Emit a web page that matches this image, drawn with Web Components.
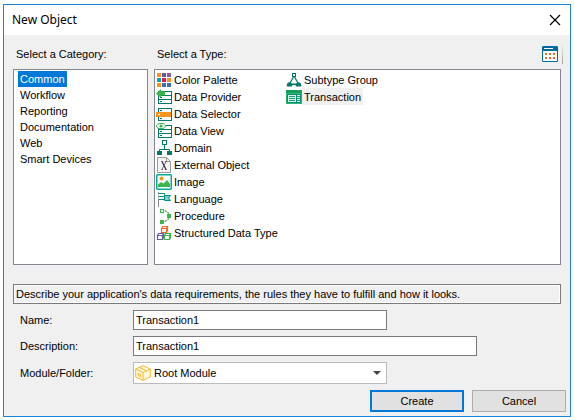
<!DOCTYPE html>
<html lang="en">
<head>
<meta charset="utf-8">
<title>New Object</title>
<style>
  body { margin: 0; background: #fff; color: #000; font: 11px/16px "Liberation Sans", Arial, sans-serif; }
</style>
</head>
<body>
<gx-dialog>
  <span slot="title">New Object</span>
  <gx-chooser>
    <span slot="category-label">Select a Category:</span>
    <span slot="type-label">Select a Type:</span>
    <gx-category slot="categories" selected>Common</gx-category>
    <gx-category slot="categories">Workflow</gx-category>
    <gx-category slot="categories">Reporting</gx-category>
    <gx-category slot="categories">Documentation</gx-category>
    <gx-category slot="categories">Web</gx-category>
    <gx-category slot="categories">Smart Devices</gx-category>
    <gx-type slot="types" icon="palette">Color Palette</gx-type>
    <gx-type slot="types" icon="provider">Data Provider</gx-type>
    <gx-type slot="types" icon="selector">Data Selector</gx-type>
    <gx-type slot="types" icon="view">Data View</gx-type>
    <gx-type slot="types" icon="domain">Domain</gx-type>
    <gx-type slot="types" icon="external">External Object</gx-type>
    <gx-type slot="types" icon="image">Image</gx-type>
    <gx-type slot="types" icon="language">Language</gx-type>
    <gx-type slot="types" icon="procedure">Procedure</gx-type>
    <gx-type slot="types" icon="structure">Structured Data Type</gx-type>
    <gx-type slot="types" icon="subtype">Subtype Group</gx-type>
    <gx-type slot="types" icon="transaction" selected>Transaction</gx-type>
  </gx-chooser>
  <gx-hint>Describe your application's data requirements, the rules they have to fulfill and how it looks.</gx-hint>
  <gx-text-field label="Name:" value="Transaction1"></gx-text-field>
  <gx-text-field label="Description:" value="Transaction1" wide></gx-text-field>
  <gx-select-field label="Module/Folder:" value="Root Module" icon="module"></gx-select-field>
  <gx-button slot="actions" primary>Create</gx-button>
  <gx-button slot="actions">Cancel</gx-button>
</gx-dialog>

<script>
const G = '#00796b';
const server = `<g fill="#fff" stroke="${G}"><rect x="2.5" y="2.5" width="13" height="4"/><rect x="2.5" y="6.5" width="13" height="4"/><rect x="2.5" y="10.5" width="13" height="4"/></g><path d="M4 4.5h2M4 8.5h2M4 12.5h2" stroke="${G}"/>`;
const ICONS = {
  palette: [['#f7941d','#5a5aa5','#8e5aa8'],['#00a99d','#ed145b','#f7941d'],['#f7941d','#3c6eb4','#3c6eb4']]
    .map((r, y) => r.map((c, x) => `<rect x="${1 + x * 5}" y="${1 + y * 5}" width="4" height="4" fill="${c}"/>`).join('')).join(''),
  provider: server + '<path d="M0 4.500 5 0v2.500h4v4H5V9z" fill="#39b54a"/>',
  selector: server + '<path d="M0 6h15v5H0z" fill="#f7941d"/><path d="M2 8h2v1H2z" fill="#fff"/>',
  view: server + '<ellipse cx="5" cy="3" rx="4.5" ry="2.5" fill="#fff" stroke="#39b54a"/><circle cx="5" cy="3" r="1.6" fill="#39b54a"/>',
  domain: `<path d="M8.500 5v4.500M3.500 12V9.500h10V12" fill="none" stroke="${G}"/><rect x="6.500" y=".5" width="4" height="4" fill="#fff" stroke="${G}"/><path d="M1 11h5v4H1zM11 11h5v4h-5z" fill="${G}"/>`,
  external: '<path d="M1.500.5h9l4 4v11h-13z" fill="#f4f4f4" stroke="#999"/><path d="M10.500.5v4h4" fill="none" stroke="#999"/><path d="M5 4.500h2M9 4.500h2M5 12.500h2M9 12.500h2M10 4.500l-4 8" stroke="#555" stroke-width=".8" fill="none"/><path d="m6 4.500 4 8" stroke="#333" stroke-width="1.300"/>',
  image: '<rect x=".75" y=".75" width="14.500" height="14.500" rx="1" fill="#fff" stroke="#00a99d" stroke-width="1.500"/><circle cx="5.500" cy="4.500" r="2" fill="#f7941d"/><path d="M2 13v-2.500L5 8l2.500 1.500L11 6l3 4v3z" fill="#39b54a"/>',
  language: '<path d="M2.500 1v15" stroke="#888"/><path d="M2.500 2.500h6v6h-6M2.500 5.500h6" fill="#fff" stroke="#00908a"/><path d="M8.500 4.500h6l-2 2.500 2 2.500h-6z" fill="#7fd0c8" stroke="#00908a"/>',
  procedure: '<rect x="4.500" y="1.500" width="3" height="3" fill="#fff" stroke="#39b54a"/><path d="m9 2.500 4 3M13 10.500l-4 3" stroke="#39b54a" stroke-width="1.300" stroke-dasharray="2 1"/><path d="M11 6h4v4h-4zM4 12h4v4H4z" fill="#39b54a"/>',
  structure: '<g fill="#fff" stroke-width="1.200"><path d="M5.500 3.500h5v4h-5zM5.500 3.500 7 1.500h4.500l-1 2M11.500 1.500v4l-1 2" stroke="#f26522"/><path d="M1.500 10.500h5v4h-5zM1.500 10.500 2.500 8.500h5l-1 2M7.500 8.500v4l-1 2" stroke="#6b58a6"/><path d="M8.500 10.500h5v4h-5zM8.500 10.500l1-2h5l-1 2M14.500 8.500v4l-1 2" stroke="#39b54a"/></g>',
  subtype: `<path d="M8 4 3.500 12h9zM3.500 12.500h9" fill="none" stroke="${G}" stroke-width="1.200"/><rect x="6.500" y="1.500" width="3" height="3" fill="#fff" stroke="${G}"/><path d="M2 11h3l1 3H1zM11 11h3l1 3h-5z" fill="${G}" stroke="${G}"/>`,
  transaction: '<path d="M0 1h16v14H0z" fill="#2bb673"/><path d="M0 1h16v3H0z" fill="#1a9d5c"/><path d="M1 5h14v9H1z" fill="#0b8b72"/><path d="M2 6h8v7H2zM11 6h3v7h-3z" fill="#d8f3e4"/><path d="M3 7.500h6M3 9.500h6M3 11.500h6M11 7.500h3M11 9.500h3M11 11.500h3" stroke="#1d9c77"/>',
  module: '<g fill="#fff8e1" stroke="#fbb829" stroke-linejoin="round"><path d="M8 .7 15.300 4v8L8 15.300.7 12V4z"/><path d="M.7 4 8 7.500 15.300 4M8 7.500v7.800M4.300 2.300l7.400 3.600" fill="none"/><path d="m3 8.500 2.500 1.200v2L3 10.500z"/></g>',
  calendar: '<rect x=".5" y=".5" width="15" height="15" rx=".5" fill="#fff" stroke="#0069a3"/><path d="M0 1h16v4H0z" fill="#0069a3"/><path d="M2 2.500h9" stroke="#fff"/><path d="M3 7h2v2H3zM7 7h2v2H7zM11 7h2v2h-2zM3 11h2v2H3zM7 11h2v2H7zM11 11h2v2h-2z" fill="#f26522"/>'
};

function define(name, render) {
  customElements.define(name, class extends HTMLElement {
    connectedCallback() {
      if (this.shadowRoot) return;
      this.attachShadow({ mode: 'open' }).innerHTML =
        '<style>*{box-sizing:border-box}:host{box-sizing:border-box}button,input,select{font:inherit;color:inherit;margin:0;border-radius:0}</style>' + render(this);
    }
  });
}

define('gx-icon', el => `
  <style>:host{display:block;width:16px;height:16px;flex:none}svg{display:block}</style>
  <svg width="16" height="16" viewBox="0 0 16 16" aria-hidden="true">${ICONS[el.getAttribute('name')]}</svg>`);

define('gx-dialog', () => `
  <style>
    :host{display:flex;flex-direction:column;min-height:calc(100vh - 7px);margin:4px 3px 3px;border:1px solid #1883d7;background:#f0f0f0}
    header{display:flex;align-items:center;justify-content:space-between;height:30px;padding:0 9px 0 8px;background:#fff}
    h1{margin:0;font:12px/16px "Noto Sans","Open Sans",sans-serif}
    button{display:flex;padding:0;border:0;background:none}
    main{flex:1;display:flex;flex-direction:column;gap:6px;padding:0 9px 6px}
    footer{display:flex;justify-content:flex-end;gap:8px;padding:0 4px 4px}
  </style>
  <header><h1><slot name="title"></slot></h1>
    <button type="button" aria-label="Close"><svg width="12" height="12" viewBox="0 0 12 12"><path d="m1 1 10 10M11 1 1 11" stroke="#000" stroke-width="1.200"/></svg></button>
  </header>
  <main><slot></slot></main>
  <footer><slot name="actions"></slot></footer>`);

define('gx-chooser', () => `
  <style>
    :host{flex:1;display:grid;grid-template:34px 1fr / 135px 1fr;column-gap:6px;margin-bottom:13px}
    .label{display:flex;align-items:center;padding:4px 0 0 3px}
    .tools{display:flex;align-items:center;margin:0 -2px 0 auto;gap:4px}
    .tools button{display:flex;padding:0;border:0;background:none}
    .sep{width:1px;height:20px;background:linear-gradient(#f0f0f0,#a0a0a0)}
    .list{border:1px solid #828790;background:#fff}
    .categories{padding:1px 4px}
    .types{display:grid;grid-auto-flow:column;grid-template-rows:repeat(10,17px);grid-auto-columns:130px;align-content:start;padding:1px}
  </style>
  <div class="label"><slot name="category-label"></slot></div>
  <div class="label"><slot name="type-label"></slot>
    <span class="tools"><button type="button" aria-label="View"><gx-icon name="calendar"></gx-icon></button><span class="sep"></span></span></div>
  <div class="list categories"><slot name="categories"></slot></div>
  <div class="list types"><slot name="types"></slot></div>`);

define('gx-category', () => `
  <style>
    :host{display:flex}
    button{height:16px;padding:0 2px;border:0;background:none;line-height:16px;white-space:nowrap}
    :host([selected]) button{background:#0078d7;color:#fff}
  </style>
  <button type="button"><slot></slot></button>`);

define('gx-type', el => `
  <style>
    :host{display:flex}
    button{display:flex;align-items:center;height:17px;padding:0;border:0;background:none;white-space:nowrap}
    span{padding:1px 2px 0;line-height:16px}
    :host([selected]) span{background:#f0f0f0}
  </style>
  <button type="button"><gx-icon name="${el.getAttribute('icon')}"></gx-icon><span><slot></slot></span></button>`);

define('gx-hint', () => `
  <style>:host{display:block;padding:0 2px;border:1px solid #7a7a7a;box-shadow:inset 0 0 0 1px #fff;line-height:18px}</style><slot></slot>`);

const fieldStyle = `
  :host{display:grid;grid-template-columns:113px 1fr;align-items:center;padding-left:7px}
  .box{width:254px;max-width:100%}
  :host([wide]) .box{width:344px}`;

define('gx-text-field', el => `
  <style>${fieldStyle}
    input{display:block;height:20px;padding:0 2px;border:1px solid #7a7a7a;background:#fff;outline:0}
  </style>
  <label for="f">${el.getAttribute('label')}</label>
  <input class="box" id="f" type="text" value="${el.getAttribute('value')}">`);

define('gx-select-field', el => `
  <style>${fieldStyle}
    .box{display:grid;grid-template-columns:16px 1fr 10px;align-items:center;height:22px;padding:0 3px 0 1px;border:1px solid #bcbcbc;background:#fff}
    select{grid-area:1/1/2/4;width:100%;height:20px;padding:0 14px 0 19px;border:0;background:none;appearance:none;outline:0}
    gx-icon{grid-area:1/1}
    svg{grid-area:1/3;pointer-events:none}
  </style>
  <label for="f">${el.getAttribute('label')}</label>
  <div class="box"><gx-icon name="${el.getAttribute('icon')}"></gx-icon>
    <select id="f"><option>${el.getAttribute('value')}</option></select>
    <svg width="8" height="4" viewBox="0 0 8 4" aria-hidden="true"><path d="M0 0h8L4 4z" fill="#444"/></svg></div>`);

define('gx-button', () => `
  <style>
    :host{display:block;width:94px}
    button{display:block;width:100%;height:22px;padding:0;border:1px solid #adadad;background:#e1e1e1}
    :host([primary]) button{border:2px solid #0078d7}
  </style>
  <button type="button"><slot></slot></button>`);
</script>
</body>
</html>
